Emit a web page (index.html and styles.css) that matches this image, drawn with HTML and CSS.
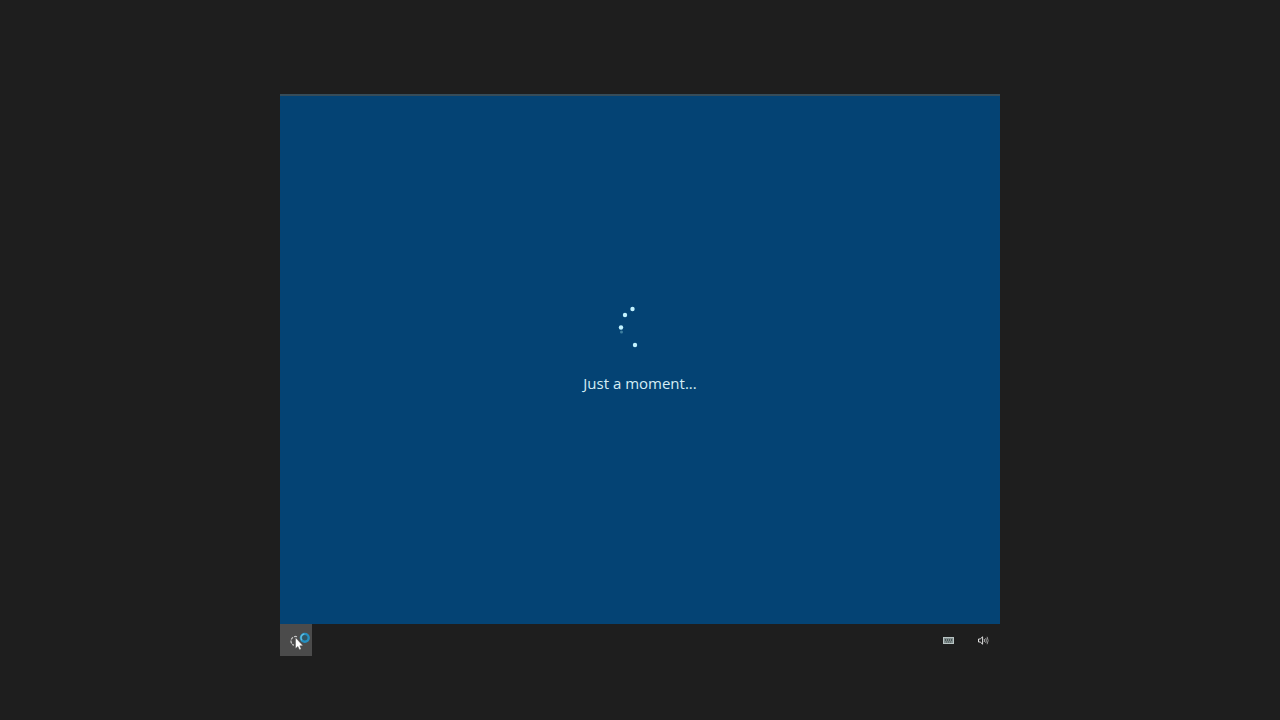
FILE: index.html
```
<!DOCTYPE html>
<html lang="en">

<head>
    <meta charset="utf-8">
    <title>Windows Setup</title>
    <link rel="stylesheet" href="styles.css">
</head>

<body>
    <div class="desktop">
        <main class="setup">
            <svg class="spinner" viewBox="0 0 48 48" aria-hidden="true">
                <circle cx="16.5" cy="13" r="2.2" />
                <circle cx="9" cy="19" r="2.2" />
                <circle cx="5" cy="31.5" r="2.2" />
                <circle class="trail" cx="5.5" cy="36" r="1.5" />
                <circle cx="19" cy="49" r="2.2" />
            </svg>
            <p class="status">Just a moment...</p>
        </main>

        <footer class="taskbar">
            <button class="task" type="button" aria-label="Ease of access">
                <svg class="access-icon" viewBox="0 0 32 32">
                    <path d="M17 12.7A4.5 4.5 0 1 0 14 21.3" />
                </svg>
                <!-- busy pointer -->
                <svg class="pointer" viewBox="0 0 32 32" aria-hidden="true">
                    <circle class="ring-outer" cx="24.8" cy="13.8" r="3.9" />
                    <path class="ring-shine" d="M21.8 16.2A3.9 3.9 0 0 1 24.3 9.9" />
                    <path class="arrow" d="M15.5 13.5V24.6L17.9 22.4L19.4 25.8L21.2 25L19.8 21.8H23Z" />
                </svg>
            </button>

            <div class="tray">
                <button class="tray-button" type="button" aria-label="Keyboard">
                    <svg class="tray-icon" viewBox="0 0 16 16">
                        <rect class="keyboard" x="2.5" y="5.5" width="10" height="6" />
                        <path class="keys" d="M4 7.5H11M4 8.5H11M5 10H10" />
                    </svg>
                </button>
                <button class="tray-button" type="button" aria-label="Volume">
                    <svg class="tray-icon" viewBox="0 0 16 16">
                        <path class="line" d="M3.5 7H5.2L7.6 4.8V12.2L5.2 10H3.5Z" />
                        <path class="line" d="M9.2 7.2Q10.1 8.5 9.2 9.8" />
                        <path class="line dim" d="M10.7 6Q12.2 8.5 10.7 11M12.1 4.8Q14.2 8.5 12.1 12.2" />
                    </svg>
                </button>
            </div>
        </footer>
    </div>
</body>

</html>
```

FILE: styles.css
```
* {
    box-sizing: border-box;
}

body {
    margin: 0;
    padding-top: 94px;
    background-color: #1e1e1e;
    font-family: "Open Sans", "Noto Sans", sans-serif;
}

.desktop {
    width: 56.25%;
    margin: 0 auto;
}

.setup {
    display: flex;
    flex-direction: column;
    align-items: center;
    justify-content: center;
    aspect-ratio: 72 / 53;
    padding-bottom: 29px;
    border-top: 2px solid #364c59;
    background-color: #044374;
}

.spinner {
    width: 48px;
    height: 48px;
    overflow: visible;
    fill: #c3f3ff;
}

.spinner .trail {
    fill: #3f7f9f;
}

.status {
    margin: 27px 0 0;
    color: #d5edf5;
    font-size: 15px;
    line-height: 24px;
}

.taskbar {
    display: flex;
    align-items: center;
    justify-content: space-between;
}

.task {
    position: relative;
    width: 32px;
    height: 32px;
    padding: 0;
    border: 0;
    background-color: #4b4b4b;
}

.access-icon {
    display: block;
    fill: none;
    stroke: #c8c8c8;
    stroke-width: 1.2;
    stroke-dasharray: 3 1;
}

.pointer {
    position: absolute;
    top: 0;
    left: 0;
}

.ring-outer {
    fill: #315462;
    stroke: #258fc0;
    stroke-width: 2.4;
}

.ring-shine {
    fill: none;
    stroke: #63bddd;
    stroke-width: 1.4;
}

.arrow {
    fill: #fff;
    stroke: #444;
    stroke-width: 0.4;
}

.tray {
    display: flex;
    gap: 2px;
    padding-right: 1px;
}

.tray-button {
    display: flex;
    align-items: center;
    justify-content: center;
    width: 32px;
    height: 32px;
    padding: 0;
    border: 0;
    background: none;
}

.tray-icon {
    width: 16px;
    height: 16px;
    fill: none;
    stroke-width: 1;
}

.keyboard {
    fill: #7f8c8c;
    stroke: #b9c4c4;
}

.keys {
    stroke: #4a5555;
    stroke-dasharray: 1 1;
}

.line {
    stroke: #dedede;
}

.dim {
    stroke: #999;
}
```
